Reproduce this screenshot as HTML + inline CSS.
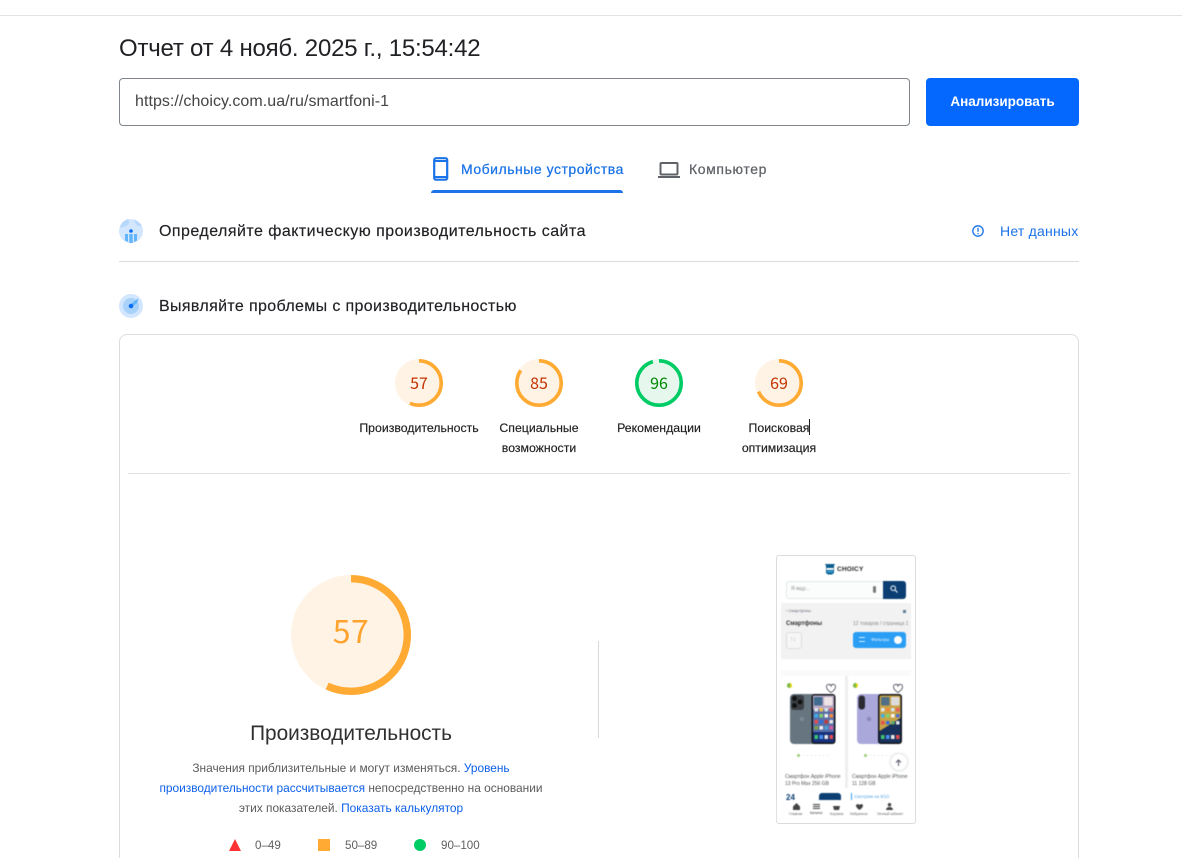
<!DOCTYPE html>
<html lang="ru"><head><meta charset="utf-8"><title>PageSpeed</title>
<style>
html,body{margin:0;padding:0;background:#fff;width:1182px;height:858px;overflow:hidden}
body{position:relative;font-family:"Liberation Sans","DejaVu Sans",sans-serif;color:#202124}
.a{position:absolute;white-space:nowrap}
.c{text-align:center}
svg{position:absolute;overflow:visible}
.lab{font-size:12.3px;line-height:20px;color:#202020;text-align:center;white-space:nowrap;position:absolute;transform:translateX(-50%);-webkit-text-stroke:.15px #202020}
.num{font-family:"Noto Sans CJK JP","DejaVu Sans",sans-serif;font-size:16px;position:absolute;transform:translateX(-50%);line-height:20px}
.t{position:absolute;white-space:nowrap;color:#555}
.b{position:absolute;left:0;top:0;width:1182px;height:858px;filter:blur(.45px)}
</style></head><body>
<div class="a" style="left:0;top:15px;width:1182px;height:1px;background:#e2e3e5"></div>
<div class="a" style="left:119px;top:34px;font-size:24px;line-height:30px;color:#202124;letter-spacing:-.22px">Отчет от 4 нояб. 2025 г., 15:54:42</div>
<div class="a" style="left:119px;top:78px;width:789px;height:46px;border:1px solid #80868b;border-radius:4px"></div>
<div class="a" style="left:135px;top:92px;font-size:16px;line-height:20px;color:#444;letter-spacing:.05px">https://choicy.com.ua/ru/smartfoni-1</div>
<div class="a c" style="left:926px;top:78px;width:153px;height:48px;background:#0468ff;border-radius:4px;color:#fff;font-size:13.5px;font-weight:bold;line-height:48px">Анализировать</div>

<svg style="left:431px;top:157px" width="24" height="24" viewBox="0 0 24 24"><rect x="3.200" y="1.200" width="13" height="21.500" rx="1.800" fill="none" stroke="#1a73e8" stroke-width="2.200"/><path d="M3.200 4h13M3.200 20h13" stroke="#1a73e8" stroke-width="2"/></svg>
<div class="a" style="left:461px;top:160px;font-size:14px;line-height:18px;color:#1a73e8;letter-spacing:.52px;-webkit-text-stroke:.25px #1a73e8">Мобильные устройства</div>
<div class="a" style="left:431px;top:190px;width:192px;height:3px;background:#1a73e8;border-radius:3px 3px 0 0"></div>
<svg style="left:657px;top:157px" width="24" height="24" viewBox="0 0 24 24"><rect x="3.500" y="6" width="17" height="11.500" rx="1" fill="none" stroke="#5f6368" stroke-width="2"/><path d="M1 20h22" stroke="#5f6368" stroke-width="2"/></svg>
<div class="a" style="left:689px;top:160px;font-size:14px;line-height:18px;color:#5f6368;letter-spacing:.62px;-webkit-text-stroke:.25px #5f6368">Компьютер</div>

<svg style="left:119px;top:219px" width="24" height="24" viewBox="0 0 24 24"><circle cx="12" cy="12" r="12" fill="#d2e6fe"/><path d="M1 8a12 12 0 0 1 8-8c2 3 1 6-2 7s-4 2-6 1zM15 1a12 12 0 0 1 7.500 6c-3 1-6-1-7.500-6z" fill="#b5d8fb"/><circle cx="12" cy="12" r="1.800" fill="#0b6ef5"/><path d="M10.300 15h3.400v9h-3.400zM6 15h3v8l-3-1.500zM15 15h3v6.500L15 23z" fill="#62b5fb"/></svg>
<div class="a" style="left:159px;top:222px;font-size:16px;line-height:20px;color:#202124;letter-spacing:.46px;-webkit-text-stroke:.15px #202124">Определяйте фактическую производительность сайта</div>
<svg style="left:971px;top:224px" width="14" height="14" viewBox="0 0 14 14"><circle cx="7" cy="7" r="5.200" fill="none" stroke="#1a73e8" stroke-width="1.300"/><path d="M7 3.800v4M7 9.100v1.200" stroke="#1a73e8" stroke-width="1.300"/></svg>
<div class="a" style="left:1000px;top:222px;font-size:14px;line-height:18px;color:#1a73e8;letter-spacing:.22px">Нет данных</div>
<div class="a" style="left:119px;top:261px;width:960px;height:1px;background:#dadce0"></div>

<svg style="left:119px;top:294px" width="24" height="24" viewBox="0 0 24 24"><circle cx="12" cy="12" r="12" fill="#d2e6fe"/><circle cx="12" cy="12" r="8" fill="#a9d2fb"/><path d="M11 11L16 6.500 19.500 4.500 18 9 13 13z" fill="#62b5fb"/><circle cx="12" cy="12" r="2.300" fill="#0b6ef5"/></svg>
<div class="a" style="left:159px;top:297px;font-size:16px;line-height:20px;color:#202124;letter-spacing:.36px;-webkit-text-stroke:.15px #202124">Выявляйте проблемы с производительностью</div>

<div class="a" style="left:119px;top:334px;width:958px;height:560px;border:1px solid #dadce0;border-radius:8px"></div>

<svg style="left:395px;top:359px" width="48" height="48" viewBox="0 0 48 48"><circle cx="24" cy="24" r="24" fill="#fff3e6"/><circle cx="24" cy="24" r="22.200" fill="none" stroke="#ffaa33" stroke-width="3.600" pathLength="100" stroke-dasharray="57 100" transform="rotate(-90 24 24)"/></svg>
<div class="num" style="left:419px;top:372px;color:#c33300">57</div>
<svg style="left:515px;top:359px" width="48" height="48" viewBox="0 0 48 48"><circle cx="24" cy="24" r="24" fill="#fff3e6"/><circle cx="24" cy="24" r="22.200" fill="none" stroke="#ffaa33" stroke-width="3.600" pathLength="100" stroke-dasharray="85 100" transform="rotate(-90 24 24)"/></svg>
<div class="num" style="left:539px;top:372px;color:#c33300">85</div>
<svg style="left:635px;top:359px" width="48" height="48" viewBox="0 0 48 48"><circle cx="24" cy="24" r="24" fill="#e6f8ee"/><circle cx="24" cy="24" r="22.200" fill="none" stroke="#00cc66" stroke-width="3.600" pathLength="100" stroke-dasharray="96 100" transform="rotate(-90 24 24)"/></svg>
<div class="num" style="left:659px;top:372px;color:#008800">96</div>
<svg style="left:755px;top:359px" width="48" height="48" viewBox="0 0 48 48"><circle cx="24" cy="24" r="24" fill="#fff3e6"/><circle cx="24" cy="24" r="22.200" fill="none" stroke="#ffaa33" stroke-width="3.600" pathLength="100" stroke-dasharray="69 100" transform="rotate(-90 24 24)"/></svg>
<div class="num" style="left:779px;top:372px;color:#c33300">69</div>

<div class="lab" style="left:419px;top:418px">Производительность</div>
<div class="lab" style="left:539px;top:418px">Специальные<br>возможности</div>
<div class="lab" style="left:659px;top:418px">Рекомендации</div>
<div class="lab" style="left:779px;top:418px">Поисковая<br>оптимизация</div>
<div class="a" style="left:809px;top:419px;width:1px;height:16px;background:#202124"></div>
<div class="a" style="left:128px;top:473px;width:942px;height:1px;background:#e0e0e0"></div>

<svg style="left:291px;top:575px" width="120" height="120" viewBox="0 0 120 120"><circle cx="60" cy="60" r="60" fill="#fff3e6"/><circle cx="60" cy="60" r="56.300" fill="none" stroke="#ffaa33" stroke-width="7.400" pathLength="100" stroke-dasharray="57 100" transform="rotate(-90 60 60)"/></svg>
<div class="num" style="left:351px;top:610px;color:#ffa32e;font-size:32px;line-height:40px;letter-spacing:.5px">57</div>
<div class="a c" style="left:151px;top:721px;width:400px;font-size:20.800px;line-height:26px;color:#303030">Производительность</div>
<div class="a c" style="left:141px;top:758px;width:420px;font-size:11.900px;line-height:20px;color:#5a5a5a">Значения приблизительные и могут изменяться. <span style="color:#0b5fe8">Уровень</span><br><span style="color:#0b5fe8">производительности рассчитывается</span> непосредственно на основании<br>этих показателей. <span style="color:#0b5fe8">Показать калькулятор</span></div>

<svg style="left:229px;top:839px" width="12" height="12" viewBox="0 0 12 12"><path d="M6 0L12 12H0z" fill="#ff3333"/></svg>
<div class="a" style="left:255px;top:837px;font-size:11.600px;line-height:18px;color:#5f5f5f">0–49</div>
<div class="a" style="left:318px;top:839px;width:12px;height:12px;background:#ffaa33"></div>
<div class="a" style="left:345px;top:837px;font-size:11.600px;line-height:18px;color:#5f5f5f">50–89</div>
<div class="a" style="left:414px;top:839px;width:12px;height:12px;background:#00cc66;border-radius:50%"></div>
<div class="a" style="left:441px;top:837px;font-size:11.600px;line-height:18px;color:#5f5f5f">90–100</div>

<div class="a" style="left:598px;top:641px;width:1px;height:97px;background:#d8d8d8"></div>

<div class="a" style="left:776px;top:555px;width:138px;height:267px;border:1px solid #dadce0;border-radius:3px;background:#fff"></div>
<div class="b">
<svg style="left:824px;top:564px" width="12" height="11" viewBox="0 0 12 11"><path d="M1 0h10l-1 2v7l-2 1.500H4L2 9V2z" fill="#0d5e8e"/><path d="M2.500 4h7v2h-7z" fill="#fff"/><path d="M3 7h6v1.500H3z" fill="#34a8e6"/></svg>
<div class="t" style="left:837px;top:566px;font-size:6.500px;line-height:8px;font-weight:bold;color:#222;letter-spacing:.2px">CHOICY</div>
<div class="a" style="left:786px;top:581px;width:118px;height:16px;border:1px solid #e3e8ea;border-radius:3px;background:#fbfdfd"></div>
<div class="a" style="left:883px;top:581px;width:23px;height:18px;background:#0b3f73;border-radius:0 3px 3px 0"></div>
<svg style="left:890px;top:585px" width="8" height="8" viewBox="0 0 8 8"><circle cx="3.200" cy="3.200" r="2.300" fill="none" stroke="#fff"/><path d="M5 5l2.500 2.500" stroke="#fff"/></svg>
<div class="t" style="left:791px;top:586px;font-size:5px;line-height:7px;color:#888">Я ищу...</div>
<div class="a" style="left:873px;top:586px;width:3px;height:7px;background:#777;border-radius:2px"></div>
<div class="a" style="left:781px;top:603px;width:130px;height:56px;background:#f2f2f2"></div>
<div class="t" style="left:786px;top:608px;font-size:4px;line-height:6px;color:#667">‹ Смартфоны</div>
<div class="a" style="left:903px;top:610px;width:3px;height:3px;background:#5b7d99"></div>
<div class="t" style="left:786px;top:620px;font-size:6px;line-height:8px;font-weight:bold;color:#333">Смартфоны</div>
<div class="t" style="left:853px;top:621px;font-size:5px;line-height:7px;color:#888">12 товаров / страница 1</div>
<div class="a" style="left:786px;top:632px;width:14px;height:15px;border:1px solid #ddd;border-radius:3px;background:#f6f6f6"></div>
<div class="t" style="left:790px;top:636px;font-size:6px;line-height:8px;color:#aaa">↑↓</div>
<div class="a" style="left:853px;top:632px;width:53px;height:16px;background:#2a9df4;border-radius:3px"></div>
<div class="t" style="left:871px;top:637px;font-size:4.500px;line-height:6px;color:#eaf6ff">Фильтры</div>
<div class="a" style="left:859px;top:637px;width:6px;height:5px;border-top:1px solid #d0ecff;border-bottom:1px solid #d0ecff;box-sizing:border-box"></div>
<div class="a" style="left:894px;top:636px;width:8px;height:8px;background:#fff;border-radius:50%"></div>
<div class="a" style="left:781px;top:670px;width:130px;height:6px;background:#fafafa"></div>
<div class="a" style="left:845px;top:676px;width:3px;height:112px;background:#eeeeee"></div>

<div class="a" style="left:787px;top:683px;width:5px;height:5px;border-radius:50%;background:#e6d400"></div>
<div class="a" style="left:787px;top:683px;width:3px;height:5px;border-radius:3px 0 0 3px;background:#79b94d"></div>
<svg style="left:826px;top:684px" width="10" height="9" viewBox="0 0 10 9"><path d="M5 8.500C1 6 .500 4 .500 2.800A2.300 2.300 0 0 1 5 2a2.300 2.300 0 0 1 4.500.8C9.500 4 9 6 5 8.500z" fill="none" stroke="#445" stroke-width=".8"/></svg>
<div class="a" style="left:853px;top:683px;width:5px;height:5px;border-radius:50%;background:#e6d400"></div>
<div class="a" style="left:853px;top:683px;width:3px;height:5px;border-radius:3px 0 0 3px;background:#79b94d"></div>
<svg style="left:893px;top:684px" width="10" height="9" viewBox="0 0 10 9"><path d="M5 8.500C1 6 .500 4 .500 2.800A2.300 2.300 0 0 1 5 2a2.300 2.300 0 0 1 4.500.8C9.500 4 9 6 5 8.500z" fill="none" stroke="#445" stroke-width=".8"/></svg>

<svg style="left:790px;top:694px" width="46" height="50" viewBox="0 0 46 50">
<rect x="0" y="0" width="28" height="50" rx="4" fill="#66757f"/>
<rect x="1" y="1" width="13" height="15" rx="3" fill="#3a4045"/>
<circle cx="4.500" cy="4.500" r="2.400" fill="#111"/><circle cx="10" cy="8" r="2.400" fill="#111"/><circle cx="4.500" cy="11.500" r="2.400" fill="#111"/>
<circle cx="12" cy="25" r="2.200" fill="#7d8a93"/>
<rect x="21.500" y="0" width="24" height="50" rx="3" fill="#12151a"/>
<rect x="23" y="1.500" width="21" height="47" rx="2" fill="#5a6fa6"/>
<rect x="23" y="1.500" width="21" height="14" fill="#b6a6c4"/>
<rect x="24" y="3" width="8.500" height="8.500" rx="1" fill="#3f6b8f"/><rect x="34" y="3" width="8.500" height="8.500" rx="1" fill="#eee3e5"/>
<g>
<rect x="24.500" y="14" width="3.500" height="3.500" fill="#e6e6e6"/><rect x="29.500" y="14" width="3.500" height="3.500" fill="#f0c14d"/><rect x="34.500" y="14" width="3.500" height="3.500" fill="#d9e3ea"/><rect x="39.500" y="14" width="3.500" height="3.500" fill="#e95b5b"/>
<rect x="24.500" y="20" width="3.500" height="3.500" fill="#3cb1e8"/><rect x="29.500" y="20" width="3.500" height="3.500" fill="#7fd36a"/><rect x="34.500" y="20" width="3.500" height="3.500" fill="#f5f5f5"/><rect x="39.500" y="20" width="3.500" height="3.500" fill="#fa8b3c"/>
<rect x="24.500" y="26" width="3.500" height="3.500" fill="#e84d4d"/><rect x="29.500" y="26" width="3.500" height="3.500" fill="#2f6fdb"/><rect x="34.500" y="26" width="3.500" height="3.500" fill="#c63a3a"/><rect x="39.500" y="26" width="3.500" height="3.500" fill="#e8e8e8"/>
<rect x="24.500" y="32" width="3.500" height="3.500" fill="#7da23f"/><rect x="29.500" y="32" width="3.500" height="3.500" fill="#f2f2f2"/><rect x="34.500" y="32" width="3.500" height="3.500" fill="#4aa3d8"/><rect x="39.500" y="32" width="3.500" height="3.500" fill="#d95aa0"/>
</g>
<rect x="23" y="38" width="21" height="10.500" fill="#16307a"/>
<rect x="24.500" y="41" width="3.500" height="4" fill="#3ec46d"/><rect x="29.500" y="41" width="3.500" height="4" fill="#4a8ff0"/><rect x="34.500" y="41" width="3.500" height="4" fill="#e9e9e9"/><rect x="39.500" y="41" width="3.500" height="4" fill="#e34b4b"/>
</svg>
<svg style="left:857px;top:694px" width="46" height="50" viewBox="0 0 46 50">
<rect x="0" y="0" width="28" height="50" rx="4" fill="#aaa7da"/>
<rect x="1.500" y="1.500" width="6.500" height="14" rx="3" fill="#2a2a33"/>
<circle cx="12" cy="25" r="2.200" fill="#8b88b8"/>
<rect x="21" y="0" width="24" height="50" rx="3" fill="#12151a"/>
<rect x="22.500" y="1.500" width="21" height="47" rx="2" fill="#c8a346"/>
<rect x="24" y="3" width="8.500" height="8.500" rx="1" fill="#4f6f86"/><rect x="34" y="3" width="8.500" height="8.500" rx="1" fill="#dcdcdc"/>
<rect x="24" y="14" width="3.500" height="3.500" fill="#e6e6e6"/><rect x="29" y="14" width="3.500" height="3.500" fill="#f08a3c"/><rect x="34" y="14" width="3.500" height="3.500" fill="#d9e3ea"/><rect x="39" y="14" width="3.500" height="3.500" fill="#e95b5b"/>
<rect x="24" y="20" width="3.500" height="3.500" fill="#3cb1e8"/><rect x="29" y="20" width="3.500" height="3.500" fill="#7fd36a"/><rect x="34" y="20" width="3.500" height="3.500" fill="#f5f5f5"/><rect x="39" y="20" width="3.500" height="3.500" fill="#4a6fd0"/>
<path d="M22.500 37L43.500 24V48.500H22.500z" fill="#17305c"/>
<rect x="24" y="27" width="3.500" height="3.500" fill="#e84d4d"/><rect x="29" y="27" width="3.500" height="3.500" fill="#2f6fdb"/><rect x="34" y="27" width="3.500" height="3.500" fill="#5fae6a"/><rect x="39" y="27" width="3.500" height="3.500" fill="#e8e8e8"/>
<rect x="24" y="41" width="3.500" height="4" fill="#3ec46d"/><rect x="29" y="41" width="3.500" height="4" fill="#4a8ff0"/><rect x="34" y="41" width="3.500" height="4" fill="#e9e9e9"/><rect x="39" y="41" width="3.500" height="4" fill="#e34b4b"/>
</svg>

<div class="a" style="left:797px;top:754px;width:3px;height:3px;border-radius:50%;background:#9ccf7a"></div>
<div class="a" style="left:803px;top:755px;width:25px;height:1px;background:repeating-linear-gradient(90deg,#ddd 0 1px,#fff 1px 4px)"></div>
<div class="a" style="left:864px;top:754px;width:3px;height:3px;border-radius:50%;background:#9ccf7a"></div>
<div class="a" style="left:870px;top:755px;width:22px;height:1px;background:repeating-linear-gradient(90deg,#ddd 0 1px,#fff 1px 4px)"></div>
<div class="a" style="left:890px;top:753px;width:18px;height:18px;background:#fff;border:1px solid #e8ecec;border-radius:50%;box-sizing:border-box;box-shadow:0 0 2px #ddd"></div>
<svg style="left:895px;top:759px" width="7" height="7" viewBox="0 0 7 7"><path d="M3.500 7V1M1 3.500l2.500-2.500L6 3.500" fill="none" stroke="#556" stroke-width="1"/></svg>

<div class="t" style="left:785px;top:774px;font-size:5px;line-height:6.500px;color:#555">Смартфон Apple iPhone<br>13 Pro Max 256 GB</div>
<div class="t" style="left:852px;top:774px;font-size:5px;line-height:6.500px;color:#555">Смартфон Apple iPhone<br>11 128 GB</div>
<div class="t" style="left:786px;top:793px;font-size:8px;line-height:9px;font-weight:bold;color:#0b3f73">24</div>
<div class="a" style="left:819px;top:793px;width:22px;height:8px;background:#0b3f73;border-radius:3px 3px 0 0"></div>
<div class="a" style="left:851px;top:793px;width:1px;height:7px;background:#2a9df4"></div>
<div class="t" style="left:854px;top:793px;font-size:4.500px;line-height:7px;color:#5aa9e6">Смотрим на 8/10</div>

<div class="a" style="left:777px;top:800px;width:137px;height:22px;background:#fff;border-radius:0 0 3px 3px"></div>
<svg style="left:793px;top:803px" width="7" height="7" viewBox="0 0 7 7"><path d="M0 3.500L3.500 0 7 3.500V7H0z" fill="#444"/></svg>
<div class="a" style="left:813px;top:804px;width:7px;height:6px;background:repeating-linear-gradient(180deg,#444 0 1px,#fff 1px 2px)"></div>
<svg style="left:833px;top:804px" width="7" height="6" viewBox="0 0 7 6"><path d="M0 2h7L6 6H1z" fill="#444"/></svg>
<svg style="left:856px;top:804px" width="7" height="6" viewBox="0 0 7 6"><path d="M3.500 6C0 3.500 0 2 0 1.500 0 0 2.500-.5 3.500 1 4.500-.5 7 0 7 1.500 7 2 7 3.500 3.500 6z" fill="#444"/></svg>
<svg style="left:886px;top:803px" width="7" height="7" viewBox="0 0 7 7"><circle cx="3.500" cy="1.700" r="1.700" fill="#444"/><path d="M0 7c0-4 7-4 7 0z" fill="#444"/></svg>
<div class="t" style="left:789px;top:812px;font-size:3.500px;line-height:5px;color:#666">Главная</div>
<div class="t" style="left:810px;top:811px;font-size:3.500px;line-height:5px;color:#333">Каталог</div>
<div class="t" style="left:830px;top:812px;font-size:3.500px;line-height:5px;color:#666">Корзина</div>
<div class="t" style="left:850px;top:812px;font-size:3.500px;line-height:5px;color:#666">Избранное</div>
<div class="t" style="left:877px;top:812px;font-size:3.500px;line-height:5px;color:#666">Личный кабинет</div>
</div>
</body></html>
